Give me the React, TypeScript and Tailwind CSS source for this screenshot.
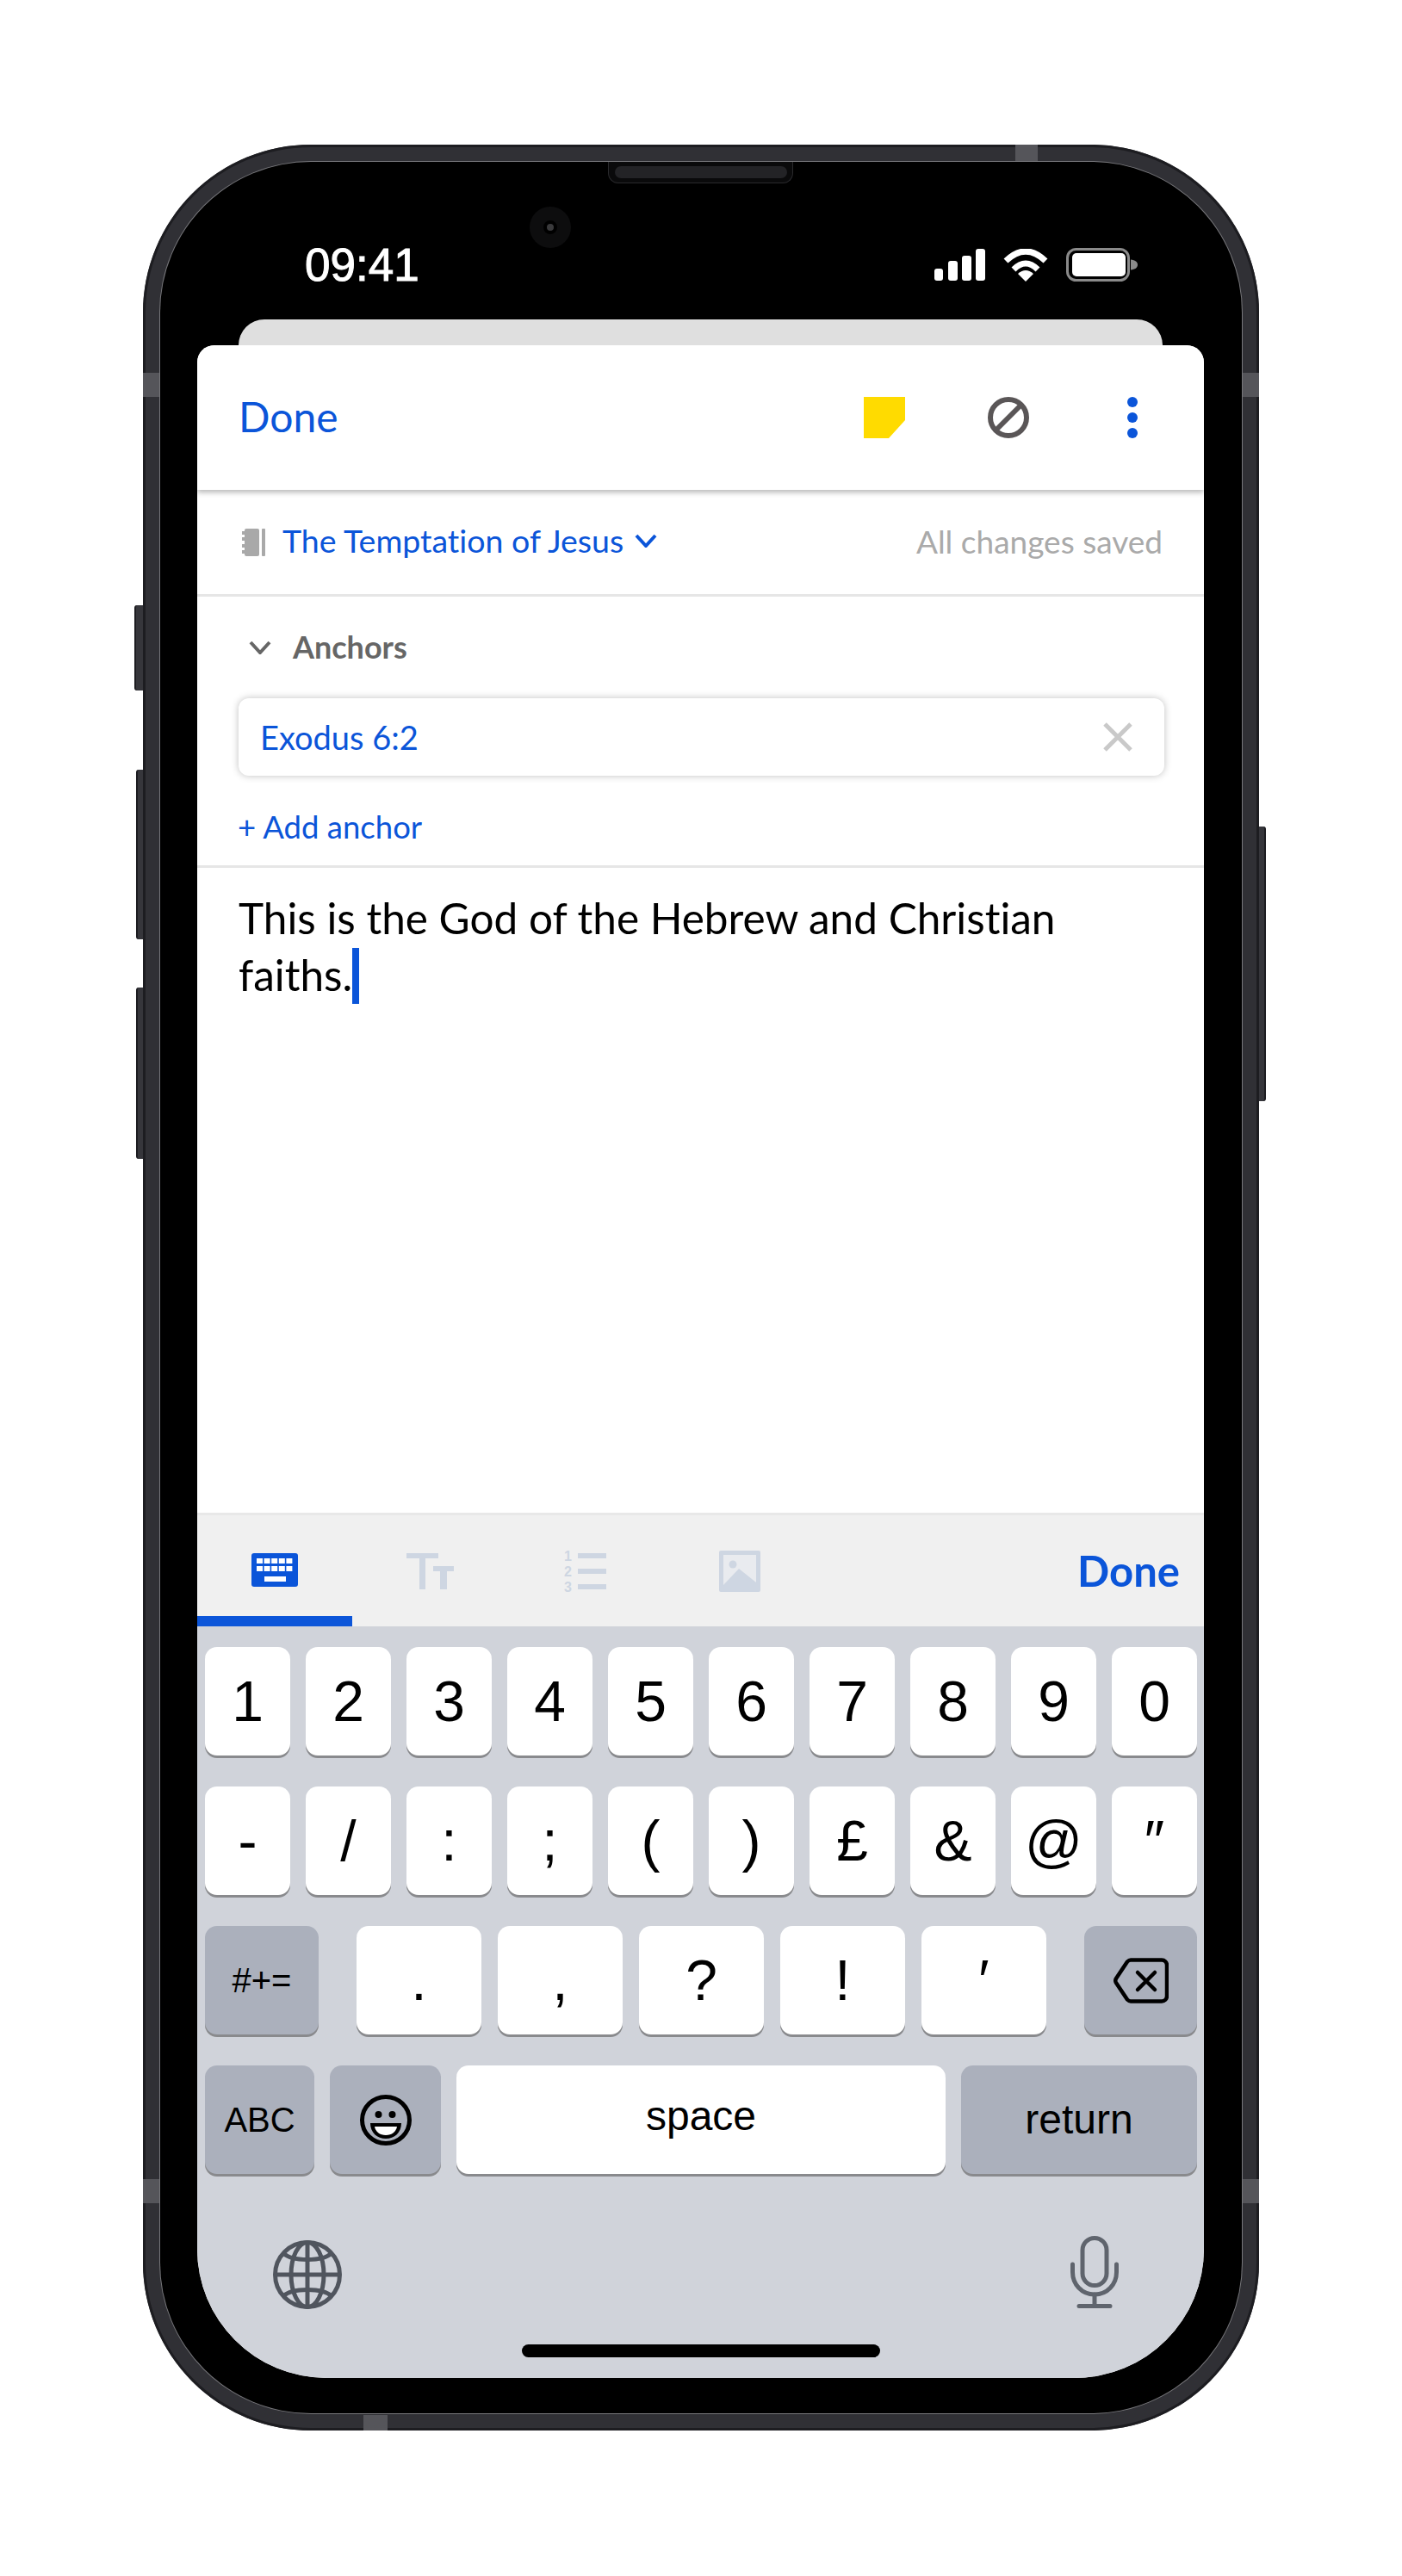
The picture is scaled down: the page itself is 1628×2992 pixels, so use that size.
const BLUE = "#0b55d9";

const Key = ({ label, className = "" }: { label: React.ReactNode; className?: string }) => {
  return (
    <div
      className={`h-[126px] rounded-[14px] bg-white shadow-[0_3px_0_#898a8d] flex items-center justify-center text-[66px] leading-none text-black font-['Liberation_Sans',sans-serif] ${className}`}
    >
      {label}
    </div>
  );
};

const GrayKey = ({ label, className = "" }: { label: React.ReactNode; className?: string }) => {
  return (
    <div
      className={`h-[126px] rounded-[14px] bg-[#abb0bc] shadow-[0_3px_0_#898a8d] flex items-center justify-center text-[40px] leading-none text-black font-['Liberation_Sans',sans-serif] ${className}`}
    >
      {label}
    </div>
  );
};

const KeyRow = ({ keys }: { keys: string[] }) => (
  <div className="flex gap-[18px]">
    {keys.map((k) => (
      <Key key={k} label={k} className="w-[99px]" />
    ))}
  </div>
);

const SignalIcon = () => (
  <svg width="59" height="37" viewBox="0 0 59 37" fill="white">
    <rect x="0" y="23" width="10" height="14" rx="3" />
    <rect x="16" y="14" width="11" height="23" rx="3" />
    <rect x="32" y="8" width="11" height="29" rx="3" />
    <rect x="48" y="0" width="11" height="37" rx="3" />
  </svg>
);

const WifiIcon = () => (
  <svg width="52" height="38" viewBox="0 0 52 38" fill="none" stroke="white" strokeWidth="7">
    <path d="M3 14Q26 -8 49 14" />
    <path d="M12 24Q26 10 40 24" />
    <path d="M26 38L17 29Q26 21 35 29Z" fill="white" stroke="none" />
  </svg>
);

const BatteryIcon = () => (
  <svg width="83" height="39" viewBox="0 0 83 39">
    <rect x="1.5" y="1.5" width="71" height="36" rx="10" fill="none" stroke="#8a8a8a" strokeWidth="3" />
    <rect x="7" y="6" width="62" height="27" rx="5" fill="white" />
    <path d="M75 13.5C80 14 83 16 83 19.5C83 23 80 25 75 25.5Z" fill="#8a8a8a" />
  </svg>
);

const NotebookIcon = () => (
  <svg width="27" height="32" viewBox="0 0 27 32" fill="#a9a9a9">
    <rect x="3" y="0" width="17" height="32" rx="2" />
    <rect x="23" y="0" width="4" height="32" rx="1" />
    <rect x="0" y="3" width="4" height="4" />
    <rect x="0" y="10" width="4" height="4" />
    <rect x="0" y="18" width="4" height="4" />
    <rect x="0" y="25" width="4" height="4" />
  </svg>
);

const ChevronIcon = ({ color }: { color: string }) => (
  <svg width="26" height="16" viewBox="0 0 26 16" fill="none" stroke={color} strokeWidth="4">
    <path d="M2 2L13 14L24 2" />
  </svg>
);

const KeyboardIcon = () => (
  <svg width="54" height="39" viewBox="0 0 54 39">
    <rect width="54" height="39" rx="3" fill={BLUE} />
    <g fill="white">
      {[6, 14.6, 23.2, 31.8, 40.4].map((x) => (
        <g key={x}>
          <rect x={x} y="6" width="7" height="6" />
          <rect x={x} y="15" width="7" height="6" />
        </g>
      ))}
      <rect x="15" y="27" width="25" height="6" />
    </g>
  </svg>
);

const TextSizeIcon = () => (
  <svg width="55" height="42" viewBox="0 0 55 42" fill="#ced6e2">
    <rect x="0" y="0" width="37" height="6" />
    <rect x="15" y="0" width="7" height="42" />
    <rect x="31" y="15" width="24" height="6" />
    <rect x="39" y="15" width="8" height="27" />
  </svg>
);

const ListIcon = () => (
  <svg width="49" height="58" viewBox="0 -6 49 58" fill="#ced6e2">
    <rect x="16" y="2" width="33" height="6" />
    <rect x="16" y="20" width="33" height="6" />
    <rect x="16" y="38" width="33" height="6" />
    <g fontSize="16" fontWeight="700" fontFamily="'Liberation Sans', sans-serif">
      <text x="0" y="11">1</text>
      <text x="0" y="29">2</text>
      <text x="0" y="47">3</text>
    </g>
  </svg>
);

const ImageIcon = () => (
  <svg width="48" height="48" viewBox="0 0 48 48">
    <rect width="48" height="48" rx="2" fill="#ced6e2" />
    <rect x="5" y="5" width="38" height="38" fill="#e9ebef" />
    <circle cx="16" cy="16" r="4.5" fill="#ced6e2" />
    <path d="M5 43V40L23 21L43 37V43Z" fill="#ced6e2" />
  </svg>
);

const DeleteIcon = () => (
  <svg width="64" height="53" viewBox="0 0 64 53" fill="none" stroke="black" strokeWidth="4.5" strokeLinecap="round" strokeLinejoin="round">
    <path d="M20 2.5H56A6 6 0 0 1 62 8.5V44.5A6 6 0 0 1 56 50.5H20Q18 50.5 16 48.5L3 29Q1.5 26.5 3 24L16 4.5Q18 2.5 20 2.5Z" />
    <path d="M28 17L48 37M48 17L28 37" />
  </svg>
);

const EmojiIcon = () => (
  <svg width="60" height="59" viewBox="0 0 60 59">
    <ellipse cx="30" cy="29.5" rx="27.5" ry="27" fill="none" stroke="black" strokeWidth="5" />
    <circle cx="21.5" cy="23" r="4" fill="black" />
    <circle cx="37.5" cy="23" r="4" fill="black" />
    <path d="M12 33H48C48 44 40 51 30 51C20 51 12 44 12 33Z" fill="black" />
    <path d="M17 37H43C42 43 37 47 30 47C23 47 18 43 17 37Z" fill="white" />
  </svg>
);

const GlobeIcon = () => (
  <svg width="80" height="80" viewBox="0 0 80 80" fill="none" stroke="#50555e" strokeWidth="5">
    <circle cx="40" cy="40" r="37.5" />
    <ellipse cx="40" cy="40" rx="19" ry="37.5" />
    <path d="M40 2V78M2 40H78" />
    <path d="M12 15C22 25 58 25 68 15" />
    <path d="M12 65C22 55 58 55 68 65" />
  </svg>
);

const MicIcon = () => (
  <svg width="56" height="84" viewBox="0 0 56 84" fill="none" stroke="#5f646d" strokeWidth="5" strokeLinecap="round">
    <rect x="14" y="2.5" width="28" height="55" rx="14" />
    <path d="M2.5 33V42C2.5 56 13 68 28 68C43 68 53.5 56 53.5 42V33" />
    <path d="M28 68V81M10 81.5H46" />
  </svg>
);

const App = () => {
  return (
    <div className="w-[1628px] h-[2992px] bg-white pt-[168px] pl-[166px] font-['Lato',sans-serif] [font-variant-ligatures:none]">
      <div className="relative w-[1296px] h-[2655px] rounded-[195px] bg-[#303035] p-[20px] shadow-[inset_0_0_0_3px_#1d1d21]">
        {/* side buttons */}
        <div className="absolute left-[-10px] top-[535px] w-[10px] h-[99px] rounded-l-[3px] bg-[#36363b] border-l-2 border-[#1d1d21]" />
        <div className="absolute left-[-8px] top-[726px] w-[8px] h-[197px] rounded-l-[3px] bg-[#36363b] border-l-2 border-[#1d1d21]" />
        <div className="absolute left-[-8px] top-[979px] w-[8px] h-[199px] rounded-l-[3px] bg-[#36363b] border-l-2 border-[#1d1d21]" />
        <div className="absolute right-[-8px] top-[792px] w-[8px] h-[319px] rounded-r-[3px] bg-[#36363b] border-r-2 border-[#1d1d21]" />
        {/* antenna bands */}
        <div className="absolute left-[1013px] top-0 w-[26px] h-[20px] bg-[#55555a]" />
        <div className="absolute left-0 top-[265px] w-[20px] h-[28px] bg-[#55555a]" />
        <div className="absolute right-0 top-[265px] w-[20px] h-[28px] bg-[#55555a]" />
        <div className="absolute left-0 top-[2363px] w-[20px] h-[28px] bg-[#55555a]" />
        <div className="absolute right-0 top-[2363px] w-[20px] h-[28px] bg-[#55555a]" />
        <div className="absolute left-[256px] bottom-0 w-[28px] h-[18px] bg-[#55555a]" />

        <div className="relative h-full rounded-[175px] bg-black pl-[43px] pr-[44px] pb-[41px] flex flex-col ring-1 ring-[#77777b]">
          {/* earpiece + camera */}
          <div className="absolute left-[520px] top-0 w-[215px] h-[25px] rounded-b-[12px] bg-[#0a0a0b] border border-t-0 border-[#2a2a2d] flex justify-center pt-[5px]">
            <div className="w-[200px] h-[14px] rounded-full bg-[#232326]" />
          </div>
          <div className="absolute left-[429px] top-[52px] w-[48px] h-[48px] rounded-full bg-[#0d0d0e] flex items-center justify-center">
            <div className="w-[16px] h-[16px] rounded-full bg-[#3a3a3c] border-[4px] border-[#000]" />
          </div>

          {/* status bar */}
          <div className="h-[183px] shrink-0 flex items-start justify-between pl-[125px] pr-[77px] pt-[100px]">
            <span className="text-[53px] leading-[40px] text-white font-['Liberation_Sans',sans-serif] [-webkit-text-stroke:1px_white]">
              09:41
            </span>
            <div className="flex items-center gap-[21px]">
              <SignalIcon />
              <WifiIcon />
              <BatteryIcon />
            </div>
          </div>

          {/* sheet behind */}
          <div className="h-[30px] shrink-0 mx-[48px] rounded-t-[30px] bg-[#dfdfdf]" />

          {/* card */}
          <div className="flex-1 flex flex-col rounded-t-[20px] rounded-b-[150px] overflow-hidden bg-white">
            <div className="relative z-10 h-[168px] shrink-0 flex items-center pl-[48px] pr-[77px] bg-white shadow-[0_3px_6px_rgba(0,0,0,0.28)]">
              <span className="flex-1 text-[48px] leading-none pb-[2px]" style={{ color: BLUE }}>Done</span>
              <svg width="48" height="48" viewBox="0 0 48 48">
                <path d="M0 0H48V27L29 48H0Z" fill="#ffdb00" />
              </svg>
              <svg className="ml-[96px]" width="48" height="48" viewBox="0 0 48 48" fill="none" stroke="#5a5657" strokeWidth="6">
                <circle cx="24" cy="24" r="21" />
                <path d="M9 39L39 9" />
              </svg>
              <div className="ml-[114px] flex flex-col gap-[6px]">
                <div className="w-[12px] h-[12px] rounded-full" style={{ background: BLUE }} />
                <div className="w-[12px] h-[12px] rounded-full" style={{ background: BLUE }} />
                <div className="w-[12px] h-[12px] rounded-full" style={{ background: BLUE }} />
              </div>
            </div>

            <div className="h-[124px] shrink-0 flex items-center pl-[52px] pr-[48px] border-b-[3px] border-[#e6e6e6]">
              <NotebookIcon />
              <span className="ml-[20px] text-[37.5px] leading-none pb-[3px]" style={{ color: BLUE }}>The Temptation of Jesus</span>
              <span className="ml-[13px] pb-[3px]"><ChevronIcon color={BLUE} /></span>
              <span className="ml-auto text-[37px] leading-none pb-[2px] text-[#aaaaaa]">All changes saved</span>
            </div>

            <div className="h-[315px] shrink-0 flex flex-col pl-[48px] pr-[46px] border-b-[3px] border-[#e6e6e6]">
              <div className="h-[118px] shrink-0 flex items-center pl-[12px]">
                <ChevronIcon color="#666666" />
                <span className="ml-[25px] text-[36px] leading-none pb-[2px] font-bold text-[#666666]">Anchors</span>
              </div>
              <div className="h-[90px] shrink-0 flex items-center pl-[25px] pr-[36px] rounded-[12px] bg-white shadow-[0_0_8px_rgba(0,0,0,0.25)]">
                <span className="flex-1 text-[38px] leading-none" style={{ color: BLUE }}>Exodus 6:2</span>
                <svg width="36" height="36" viewBox="0 0 36 36" stroke="#c9c9c9" strokeWidth="5">
                  <path d="M3 3L33 33M33 3L3 33" />
                </svg>
              </div>
              <div className="mt-[41px] -ml-[1px] text-[36.5px] leading-none" style={{ color: BLUE }}>+ Add anchor</div>
            </div>

            <div className="flex-1 pt-[25px] pl-[48px] pr-[48px] text-[49.5px] leading-[66px] text-black">
              This is the God of the Hebrew and Christian faiths.
              <span className="inline-block w-[8px] h-[65px] align-[-15px]" style={{ background: BLUE }} />
            </div>

            <div className="h-[132px] shrink-0 flex border-t-[3px] border-[#e8e8e8] bg-[#f0f0f0]">
              <div className="w-[180px] flex items-center justify-center pt-[9px] border-b-[12px]" style={{ borderColor: BLUE }}>
                <KeyboardIcon />
              </div>
              <div className="w-[180px] flex items-center justify-center"><TextSizeIcon /></div>
              <div className="w-[180px] flex items-center justify-center"><ListIcon /></div>
              <div className="w-[180px] flex items-center justify-center"><ImageIcon /></div>
              <span className="ml-auto self-center pr-[28px] text-[49px] leading-none font-bold" style={{ color: BLUE }}>Done</span>
            </div>

            {/* keyboard */}
            <div className="h-[873px] shrink-0 bg-[#d0d3da] pt-[24px] pl-[9px] pr-[8px] flex flex-col">
              <div className="flex flex-col gap-[36px]">
                <KeyRow keys={["1", "2", "3", "4", "5", "6", "7", "8", "9", "0"]} />
                <KeyRow keys={["-", "/", ":", ";", "(", ")", "£", "&", "@", "″"]} />
                <div className="flex items-center justify-between">
                  <GrayKey label="#+=" className="w-[132px]" />
                  <div className="flex gap-[19px]">
                    {[".", ",", "?", "!", "′"].map((k) => (
                      <Key key={k} label={k} className="w-[145px]" />
                    ))}
                  </div>
                  <GrayKey label={<DeleteIcon />} className="w-[131px]" />
                </div>
                <div className="flex gap-[18px]">
                  <GrayKey label="ABC" className="w-[127px]" />
                  <GrayKey label={<EmojiIcon />} className="w-[129px]" />
                  <Key label={<span className="text-[48px] pb-[8px]">space</span>} className="w-[568px]" />
                  <GrayKey label={<span className="text-[48px]">return</span>} className="flex-1" />
                </div>
              </div>
              <div className="mt-[77px] flex items-start justify-between pl-[79px] pr-[91px]">
                <GlobeIcon />
                <div className="-mt-[5px]"><MicIcon /></div>
              </div>
              <div className="mt-[41px] mx-auto w-[416px] h-[15px] rounded-full bg-black" />
            </div>
          </div>
        </div>
      </div>
    </div>
  );
};

export default App;
